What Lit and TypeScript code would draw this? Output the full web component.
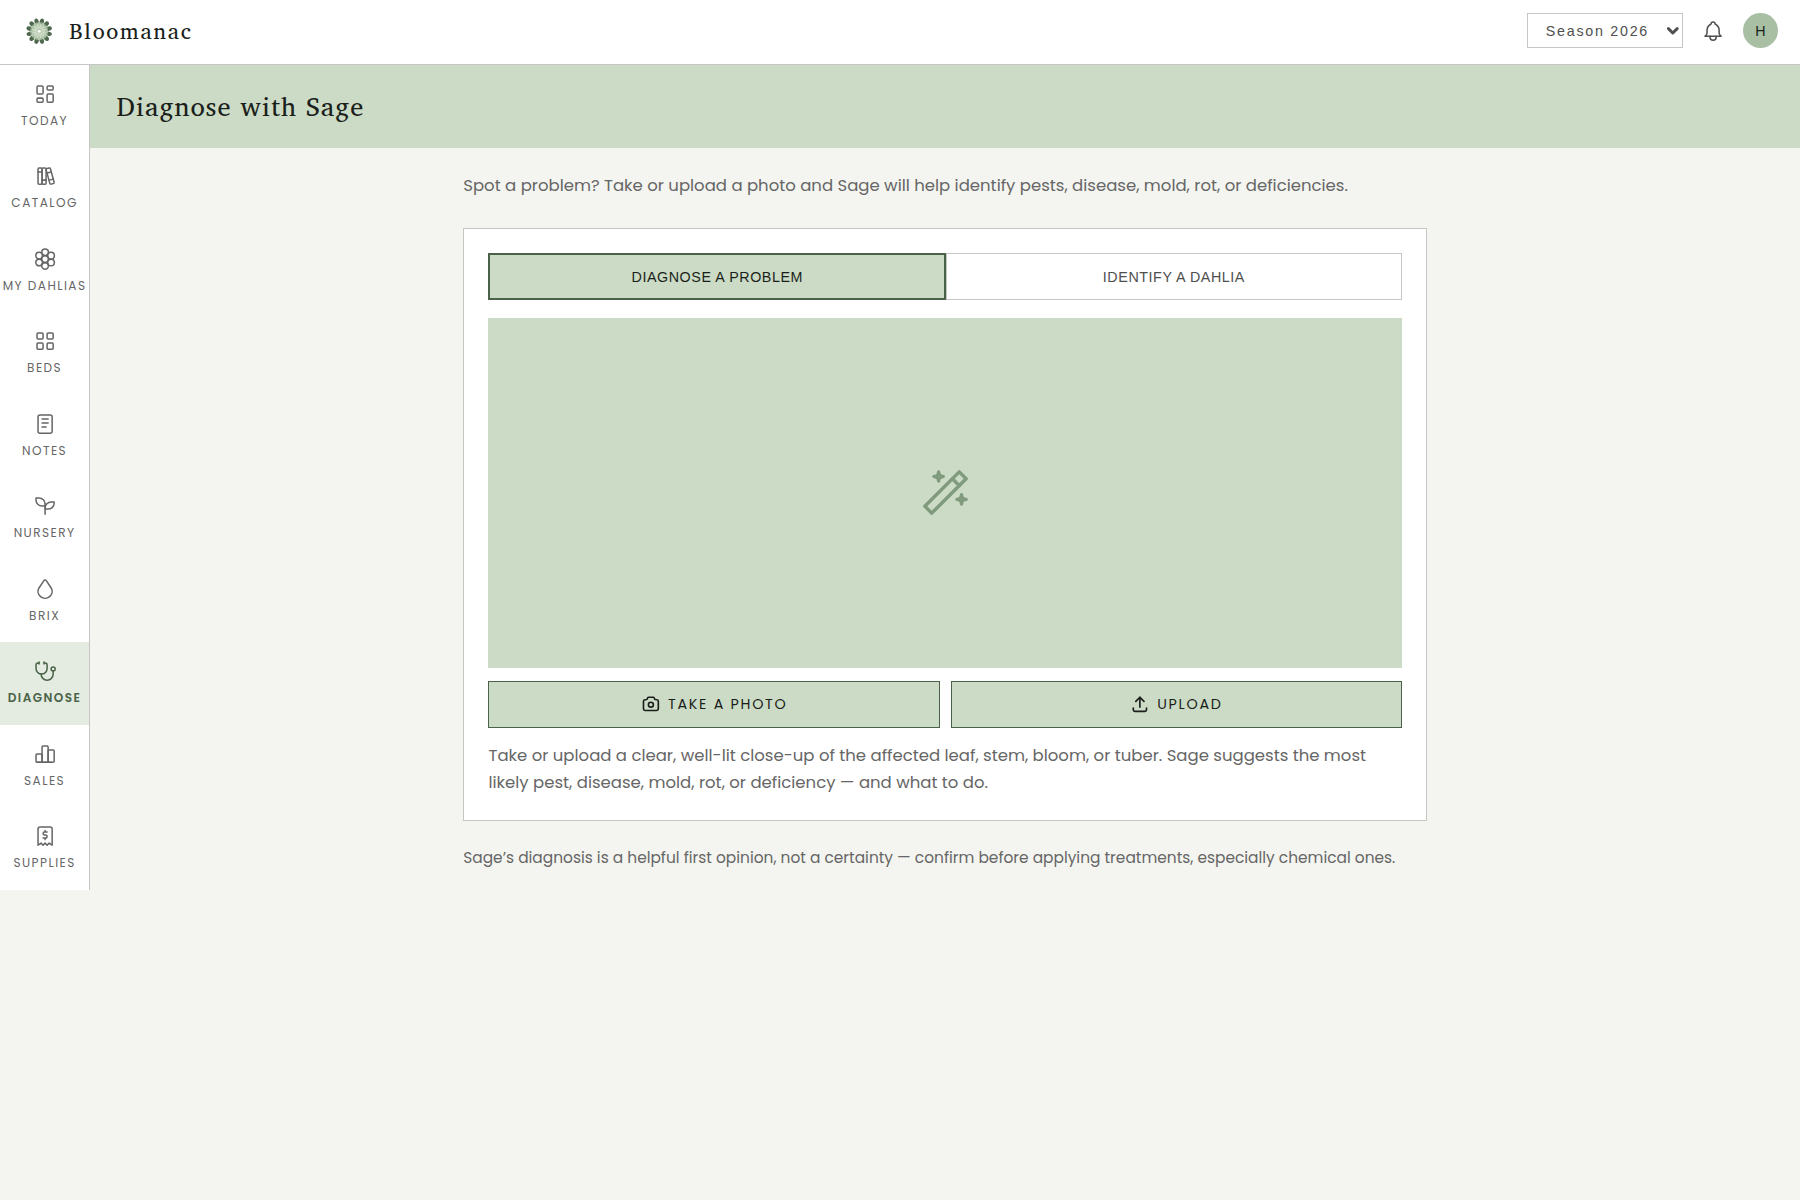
import { LitElement, html, css, svg } from "lit";
import { customElement, property, state } from "lit/decorators.js";
import { classMap } from "lit/directives/class-map.js";

const ICONS: Record<string, string[]> = {
  today: [
    "M5 4h4a1 1 0 0 1 1 1v6a1 1 0 0 1 -1 1h-4a1 1 0 0 1 -1 -1v-6a1 1 0 0 1 1 -1z",
    "M5 16h4a1 1 0 0 1 1 1v2a1 1 0 0 1 -1 1h-4a1 1 0 0 1 -1 -1v-2a1 1 0 0 1 1 -1z",
    "M15 12h4a1 1 0 0 1 1 1v6a1 1 0 0 1 -1 1h-4a1 1 0 0 1 -1 -1v-6a1 1 0 0 1 1 -1z",
    "M15 4h4a1 1 0 0 1 1 1v2a1 1 0 0 1 -1 1h-4a1 1 0 0 1 -1 -1v-2a1 1 0 0 1 1 -1z",
  ],
  catalog: [
    "M5 5a1 1 0 0 1 1 -1h2a1 1 0 0 1 1 1v14a1 1 0 0 1 -1 1h-2a1 1 0 0 1 -1 -1z",
    "M9 5a1 1 0 0 1 1 -1h2a1 1 0 0 1 1 1v14a1 1 0 0 1 -1 1h-2a1 1 0 0 1 -1 -1z",
    "M5 8h4",
    "M9 16h4",
    "M13.803 4.56l2.184 -.53c.562 -.135 1.133 .19 1.282 .732l3.695 13.418a1.02 1.02 0 0 1 -.634 1.219l-.133 .041l-2.184 .53c-.562 .135 -1.133 -.19 -1.282 -.732l-3.695 -13.418a1.02 1.02 0 0 1 .634 -1.219l.133 -.041z",
    "M14 9l4 -1",
    "M16 16l3.923 -.98",
  ],
  dahlia: [
    "M8.7 12a3.3 3.3 0 1 0 6.6 0a3.3 3.3 0 1 0 -6.6 0",
    "M8.7 5.2a3.3 3.3 0 1 0 6.6 0a3.3 3.3 0 1 0 -6.6 0",
    "M8.7 18.8a3.3 3.3 0 1 0 6.6 0a3.3 3.3 0 1 0 -6.6 0",
    "M14.6 8.6a3.3 3.3 0 1 0 6.6 0a3.3 3.3 0 1 0 -6.6 0",
    "M14.6 15.4a3.3 3.3 0 1 0 6.6 0a3.3 3.3 0 1 0 -6.6 0",
    "M2.8 8.6a3.3 3.3 0 1 0 6.6 0a3.3 3.3 0 1 0 -6.6 0",
    "M2.8 15.4a3.3 3.3 0 1 0 6.6 0a3.3 3.3 0 1 0 -6.6 0",
  ],
  beds: [
    "M5 4h4a1 1 0 0 1 1 1v4a1 1 0 0 1 -1 1h-4a1 1 0 0 1 -1 -1v-4a1 1 0 0 1 1 -1z",
    "M15 4h4a1 1 0 0 1 1 1v4a1 1 0 0 1 -1 1h-4a1 1 0 0 1 -1 -1v-4a1 1 0 0 1 1 -1z",
    "M5 14h4a1 1 0 0 1 1 1v4a1 1 0 0 1 -1 1h-4a1 1 0 0 1 -1 -1v-4a1 1 0 0 1 1 -1z",
    "M15 14h4a1 1 0 0 1 1 1v4a1 1 0 0 1 -1 1h-4a1 1 0 0 1 -1 -1v-4a1 1 0 0 1 1 -1z",
  ],
  notes: [
    "M5 5a2 2 0 0 1 2 -2h10a2 2 0 0 1 2 2v14a2 2 0 0 1 -2 2h-10a2 2 0 0 1 -2 -2z",
    "M9 7h6",
    "M9 11h6",
    "M9 15h4",
  ],
  nursery: [
    "M12 10a6 6 0 0 0 -6 -6h-3v2a6 6 0 0 0 6 6h3",
    "M12 14a6 6 0 0 1 6 -6h3v1a6 6 0 0 1 -6 6h-3",
    "M12 20v-10",
  ],
  brix: [
    "M7.502 19.423c2.602 2.105 6.395 2.105 8.996 0c2.602 -2.105 3.262 -5.708 1.566 -8.546l-4.89 -7.26c-.42 -.625 -1.287 -.803 -1.936 -.397a1.376 1.376 0 0 0 -.41 .397l-4.893 7.26c-1.695 2.838 -1.035 6.441 1.567 8.546z",
  ],
  diagnose: [
    "M6 4h-1a2 2 0 0 0 -2 2v3.5a5.5 5.5 0 0 0 11 0v-3.5a2 2 0 0 0 -2 -2h-1",
    "M8 15a6 6 0 1 0 12 0v-3",
    "M11 3v2",
    "M6 3v2",
    "M18 10a2 2 0 1 0 4 0a2 2 0 1 0 -4 0",
  ],
  sales: [
    "M3 13a1 1 0 0 1 1 -1h4a1 1 0 0 1 1 1v6a1 1 0 0 1 -1 1h-4a1 1 0 0 1 -1 -1z",
    "M15 9a1 1 0 0 1 1 -1h4a1 1 0 0 1 1 1v10a1 1 0 0 1 -1 1h-4a1 1 0 0 1 -1 -1z",
    "M9 5a1 1 0 0 1 1 -1h4a1 1 0 0 1 1 1v14a1 1 0 0 1 -1 1h-4a1 1 0 0 1 -1 -1z",
    "M4 20h14",
  ],
  supplies: [
    "M5 21v-16a2 2 0 0 1 2 -2h10a2 2 0 0 1 2 2v16l-3 -2l-2 2l-2 -2l-2 2l-2 -2l-3 2",
    "M14 8h-2.5a1.5 1.5 0 0 0 0 3h1a1.5 1.5 0 0 1 0 3h-2.5m2 0v1.5m0 -9v1.5",
  ],
  bell: [
    "M10 5a2 2 0 1 1 4 0a7 7 0 0 1 4 6v3a4 4 0 0 0 2 3h-16a4 4 0 0 0 2 -3v-3a7 7 0 0 1 4 -6",
    "M9 17v1a3 3 0 0 0 6 0v-1",
  ],
  wand: [
    "M6 21l15 -15l-3 -3l-15 15l3 3",
    "M15 6l3 3",
    "M9 3a2 2 0 0 0 2 2a2 2 0 0 0 -2 2a2 2 0 0 0 -2 -2a2 2 0 0 0 2 -2",
    "M19 13a2 2 0 0 0 2 2a2 2 0 0 0 -2 2a2 2 0 0 0 -2 -2a2 2 0 0 0 2 -2",
  ],
  camera: [
    "M5 7h1a2 2 0 0 0 2 -2a1 1 0 0 1 1 -1h6a1 1 0 0 1 1 1a2 2 0 0 0 2 2h1a2 2 0 0 1 2 2v9a2 2 0 0 1 -2 2h-14a2 2 0 0 1 -2 -2v-9a2 2 0 0 1 2 -2",
    "M9 13a3 3 0 1 0 6 0a3 3 0 0 0 -6 0",
  ],
  upload: [
    "M4 17v2a2 2 0 0 0 2 2h12a2 2 0 0 0 2 -2v-2",
    "M7 9l5 -5l5 5",
    "M12 4v12",
  ],
  chevron: ["M6 9l6 6l6 -6"],
};

@customElement("line-icon")
export class LineIcon extends LitElement {
  @property() name = "";

  static styles = css`
    :host {
      display: block;
      width: 22px;
      height: 22px;
      flex: none;
    }
    svg {
      display: block;
      width: 100%;
      height: 100%;
      fill: none;
      stroke: currentColor;
      stroke-width: var(--icon-stroke, 1.5);
      stroke-linecap: round;
      stroke-linejoin: round;
    }
  `;

  render() {
    return html`<svg viewBox="0 0 24 24" aria-hidden="true">
      ${(ICONS[this.name] ?? []).map((d) => svg`<path d=${d}></path>`)}
    </svg>`;
  }
}

@customElement("bloom-logo")
export class BloomLogo extends LitElement {
  static styles = css`
    :host {
      display: block;
      width: 24px;
      height: 24px;
      flex: none;
    }
    svg {
      display: block;
      width: 100%;
      height: 100%;
    }
  `;

  render() {
    const ring = (offset: number, fill: string, cy: number, rx: number, ry: number) =>
      Array.from(
        { length: 12 },
        (_, i) =>
          svg`<ellipse cy=${-cy} rx=${rx} ry=${ry} fill=${fill} transform=${`rotate(${offset + i * 30})`}></ellipse>`
      );
    return html`<svg viewBox="-13.5 -13.5 27 27" aria-hidden="true">
      ${ring(15, "#4f694d", 10, 2.2, 3.4)}
      ${ring(15, "#93ab8e", 6.4, 1.9, 3)}
      ${ring(0, "#b4c8ae", 6, 1.6, 3.4)}
      ${ring(15, "#ccdbc5", 4.6, 1, 3)}
      <circle r="2.4" fill="#a9bfa3"></circle>
      <circle r="1.6" fill="#fff"></circle>
    </svg>`;
  }
}

const NAV = [
  { icon: "today", label: "Today" },
  { icon: "catalog", label: "Catalog" },
  { icon: "dahlia", label: "My Dahlias" },
  { icon: "beds", label: "Beds" },
  { icon: "notes", label: "Notes" },
  { icon: "nursery", label: "Nursery" },
  { icon: "brix", label: "Brix" },
  { icon: "diagnose", label: "Diagnose" },
  { icon: "sales", label: "Sales" },
  { icon: "supplies", label: "Supplies" },
];

@customElement("app-root")
export class AppRoot extends LitElement {
  @state() private mode = "diagnose";

  static styles = css`
    :host {
      --ink: #1b1f1b;
      --text: #4f4f4f;
      --muted: #666666;
      --line: #c6c6c6;
      --sage: #ccdbc5;
      --sage-pale: #e4ece1;
      --sage-mid: #a9bfa3;
      --forest: #4a6348;
      --sans: Poppins, "Open Sans", sans-serif;
      --serif: "Charis SIL", "Liberation Serif", serif;
      --control: "Liberation Sans", Arial, sans-serif;
      display: block;
      min-height: 100vh;
      background: #f4f5f0;
      color: var(--muted);
    }
    * {
      box-sizing: border-box;
    }
    h1,
    p {
      margin: 0;
    }
    /* The whole interface is set at 110% of its base size. */
    .page {
      zoom: 1.1;
      font-family: var(--sans);
      font-size: 15px;
      line-height: 24px;
    }
    .topbar {
      display: flex;
      align-items: center;
      justify-content: space-between;
      height: 59px;
      padding: 0 20px 2px 24px;
      background: #fff;
      border-bottom: 1px solid var(--line);
    }
    .brand {
      display: flex;
      align-items: center;
      gap: 15px;
      color: var(--ink);
      text-decoration: none;
      font-family: var(--serif);
      font-size: 20px;
      letter-spacing: 0.08em;
    }
    .tools {
      display: flex;
      align-items: center;
      gap: 16px;
    }
    .season {
      display: grid;
      align-items: center;
      color: var(--text);
    }
    .season select,
    .season line-icon {
      grid-area: 1 / 1;
    }
    .season select {
      appearance: none;
      width: 142px;
      height: 32px;
      padding: 0 28px 0 16px;
      border: 1px solid var(--line);
      border-radius: 0;
      background: #fff;
      color: inherit;
      font-family: var(--control);
      font-size: 13px;
      letter-spacing: 0.12em;
    }
    .season line-icon {
      justify-self: end;
      width: 16px;
      height: 16px;
      margin-right: 2px;
      pointer-events: none;
      --icon-stroke: 4;
    }
    button {
      margin: 0;
      border: 0;
      border-radius: 0;
      background: none;
      cursor: pointer;
    }
    .bell {
      padding: 0;
      color: var(--text);
    }
    .avatar {
      width: 32px;
      height: 32px;
      padding: 0;
      border-radius: 50%;
      background: var(--sage-mid);
      color: var(--ink);
      font-family: var(--control);
      font-size: 13px;
    }
    .shell {
      display: flex;
      align-items: flex-start;
    }
    .rail {
      flex: none;
      width: 82px;
      background: #fff;
      border-right: 1px solid var(--line);
    }
    .rail a {
      display: flex;
      flex-direction: column;
      align-items: center;
      justify-content: center;
      gap: 4px;
      height: 75px;
      color: var(--muted);
      text-decoration: none;
      text-transform: uppercase;
      white-space: nowrap;
      font-size: 11px;
      line-height: 18px;
      letter-spacing: 0.12em;
    }
    .rail a.current {
      background: var(--sage-pale);
      color: var(--forest);
      font-weight: 600;
    }
    main {
      flex: 1;
      min-width: 0;
    }
    .banner {
      padding: 20px 24px;
      background: var(--sage);
    }
    .banner h1 {
      color: var(--ink);
      font-family: var(--serif);
      font-size: 24px;
      font-weight: 400;
      line-height: 36px;
      letter-spacing: 0.04em;
    }
    .content {
      display: flex;
      flex-direction: column;
      max-width: 920px;
      margin: 0 auto;
      padding: 22px;
    }
    .intro {
      margin-bottom: 26px;
    }
    .card {
      display: flex;
      flex-direction: column;
      margin-bottom: 22px;
      padding: 22px;
      background: #fff;
      border: 1px solid var(--line);
    }
    .tabs {
      display: flex;
      margin-bottom: 16px;
    }
    .tabs button {
      flex: 1 1 0;
      height: 43px;
      padding: 0 12px;
      border: 1px solid var(--line);
      background: #fff;
      color: var(--text);
      font-family: var(--control);
      font-size: 13px;
      letter-spacing: 0.04em;
      text-transform: uppercase;
    }
    .tabs button.active {
      border: 2px solid var(--forest);
      background: var(--sage);
      color: var(--ink);
    }
    .preview {
      display: grid;
      place-items: center;
      min-height: 318px;
      margin-bottom: 12px;
      background: var(--sage);
      color: #809a7d;
    }
    .preview line-icon {
      width: 50px;
      height: 50px;
    }
    .actions {
      display: grid;
      grid-template-columns: 1fr 1fr;
      gap: 10px;
      margin-bottom: 14px;
    }
    .actions button {
      display: flex;
      align-items: center;
      justify-content: center;
      gap: 7px;
      height: 43px;
      border: 1px solid var(--forest);
      background: var(--sage);
      color: var(--ink);
      font-family: inherit;
      font-size: 13px;
      letter-spacing: 0.12em;
      text-transform: uppercase;
    }
    .actions line-icon {
      width: 18px;
      height: 18px;
      --icon-stroke: 2;
    }
    .fine {
      font-size: 14px;
      line-height: 22px;
    }
  `;

  private tab(id: string, label: string) {
    const on = this.mode === id;
    return html`<button
      type="button"
      class=${classMap({ active: on })}
      aria-pressed=${on ? "true" : "false"}
      @click=${() => (this.mode = id)}
    >
      ${label}
    </button>`;
  }

  render() {
    return html`<div class="page">
      <header class="topbar">
        <a class="brand" href="#home"><bloom-logo></bloom-logo><span>Bloomanac</span></a>
        <div class="tools">
          <div class="season">
            <select aria-label="Season">
              <option>Season 2026</option>
            </select>
            <line-icon name="chevron"></line-icon>
          </div>
          <button class="bell" type="button" aria-label="Notifications">
            <line-icon name="bell"></line-icon>
          </button>
          <button class="avatar" type="button" aria-label="H, account">H</button>
        </div>
      </header>
      <div class="shell">
        <nav class="rail" aria-label="Main">
          ${NAV.map(
            (n) => html`<a
              href="#${n.icon}"
              class=${classMap({ current: n.icon === "diagnose" })}
              ><line-icon name=${n.icon}></line-icon><span>${n.label}</span></a
            >`
          )}
        </nav>
        <main>
          <div class="banner"><h1>Diagnose with Sage</h1></div>
          <div class="content">
            <p class="intro">
              Spot a problem? Take or upload a photo and Sage will help identify pests, disease,
              mold, rot, or deficiencies.
            </p>
            <section class="card">
              <div class="tabs">
                ${this.tab("diagnose", "Diagnose a problem")}
                ${this.tab("identify", "Identify a dahlia")}
              </div>
              <div class="preview"><line-icon name="wand"></line-icon></div>
              <div class="actions">
                <button type="button"><line-icon name="camera"></line-icon>Take a photo</button>
                <button type="button"><line-icon name="upload"></line-icon>Upload</button>
              </div>
              <p>
                Take or upload a clear, well-lit close-up of the affected leaf, stem, bloom, or
                tuber. Sage suggests the most likely pest, disease, mold, rot, or deficiency — and
                what to do.
              </p>
            </section>
            <p class="fine">
              Sage’s diagnosis is a helpful first opinion, not a certainty — confirm before applying
              treatments, especially chemical ones.
            </p>
          </div>
        </main>
      </div>
    </div>`;
  }
}
